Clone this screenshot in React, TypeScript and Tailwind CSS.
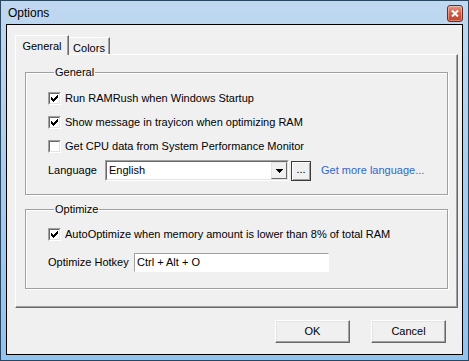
const font = { fontFamily: '"Liberation Sans", Arial, sans-serif' };

function CheckBox({ checked }: { checked: boolean }) {
  return (
    <div className="h-[13px] w-[13px] shrink-0 border border-t-[#a0a0a0] border-l-[#a0a0a0] border-r-white border-b-white">
      <div className="flex h-full w-full items-center justify-center border border-t-[#696969] border-l-[#696969] border-r-[#e3e3e3] border-b-[#e3e3e3] bg-white">
        {checked && (
          <svg width="7" height="7" viewBox="0 0 7 7" shapeRendering="crispEdges">
            <path
              d="M0 2h1v1H0zM0 3h2v1H0zM0 4h3v1H0zM1 5h2v1H1zM2 6h1v1H2zM3 3h1v3H3zM4 2h1v3H4zM5 1h1v3H5zM6 0h1v3H6z"
              fill="#000"
            />
          </svg>
        )}
      </div>
    </div>
  );
}

function CheckRow({ checked, label }: { checked: boolean; label: string }) {
  return (
    <div className="flex h-[24px] items-center gap-[4px]">
      <CheckBox checked={checked} />
      <span>{label}</span>
    </div>
  );
}

function RaisedButton({ label, className }: { label: string; className: string }) {
  return (
    <div
      className={`flex items-center justify-center border border-t-white border-l-white border-r-[#696969] border-b-[#696969] bg-[#f0f0f0] shadow-[inset_-1px_-1px_0_#a0a0a0,inset_1px_1px_0_#e3e3e3] ${className}`}
    >
      {label}
    </div>
  );
}

export default function App() {
  return (
    <div
      className="flex h-[361px] w-[469px] flex-col border border-[#2b4660] bg-gradient-to-b from-[#c0d8f0] via-[#a9cdee] to-[#92c3ee] text-[11px] text-black"
      style={font}
    >
      {/* Title bar */}
      <div className="flex h-[23px] shrink-0 items-start justify-between">
        <span className="pl-[7px] pt-[4px] text-[12px] leading-[16px] text-black">Options</span>
        <div className="mr-[5px] mt-[4px] flex h-[17px] w-[16px] items-center justify-center rounded-[3px] border border-[#6d2c22] bg-gradient-to-b from-[#e59a88] via-[#d35b43] to-[#c2432c] shadow-[inset_0_0_0_1px_rgba(255,255,255,0.35)]">
          <svg width="8" height="7" viewBox="0 0 8 7">
            <path d="M1 0.5L7 6.5M7 0.5L1 6.5" stroke="#fff" strokeWidth="2" />
          </svg>
        </div>
      </div>

      {/* Client area */}
      <div className="mx-[5px] mb-[5px] flex flex-1 flex-col border border-black bg-[#f0f0f0]">
        {/* Tabs */}
        <div className="flex items-end pl-[8px] pt-[10px]">
          <div className="relative z-10 mb-[-1px] flex h-[20px] w-[54px] items-start justify-center border-l border-t border-r border-l-white border-t-white border-r-[#696969] bg-[#f0f0f0] pt-[2px] shadow-[inset_-1px_0_0_#a0a0a0]">
            General
          </div>
          <div className="flex h-[17px] w-[41px] items-start justify-center border-t border-r border-t-white border-r-[#696969] bg-[#f0f0f0] pt-[2px] shadow-[inset_-1px_0_0_#a0a0a0]">
            Colors
          </div>
        </div>

        {/* Tab panel */}
        <div className="ml-[8px] mr-[4px] flex h-[254px] flex-col border border-t-white border-l-white border-r-[#696969] border-b-[#696969] px-[9px] pt-[11px] shadow-[inset_-1px_-1px_0_#a0a0a0]">
          <fieldset className="border border-[#a0a0a0] pb-[13px] pl-[22px] pr-[10px] pt-[7px] shadow-[1px_1px_0_#fff,inset_1px_1px_0_#fff]">
            <legend className="ml-[6px] px-[1px] leading-[13px]">General</legend>
            <CheckRow checked label="Run RAMRush when Windows Startup" />
            <CheckRow checked label="Show message in trayicon when optimizing RAM" />
            <CheckRow checked={false} label="Get CPU data from System Performance Monitor" />
            <div className="mt-[2px] flex h-[21px] items-center">
              <span className="w-[57px] shrink-0 pl-[0px]">Language</span>
              <div className="flex h-[21px] w-[184px] items-stretch border border-t-[#a0a0a0] border-l-[#a0a0a0] border-r-white border-b-white">
                <div className="flex flex-1 items-center border border-t-[#696969] border-l-[#696969] border-r-[#e3e3e3] border-b-[#e3e3e3] bg-white pl-[2px]">
                  <span className="flex-1">English</span>
                  <div className="flex h-full w-[16px] items-center justify-center border border-t-[#e3e3e3] border-l-[#e3e3e3] border-r-[#696969] border-b-[#696969] bg-[#f0f0f0]">
                    <svg width="7" height="4" viewBox="0 0 7 4" shapeRendering="crispEdges">
                      <path d="M0 0h7v1H0zM1 1h5v1H1zM2 2h3v1H2zM3 3h1v1H3z" fill="#000" />
                    </svg>
                  </div>
                </div>
              </div>
              <div className="ml-[2px] flex h-[20px] w-[20px] items-center justify-center border border-[#3c3c3c] bg-[#f0f0f0] pb-[3px] shadow-[inset_1px_1px_0_#fff,inset_-1px_-1px_0_#a0a0a0]">
                ...
              </div>
              <span className="ml-[10px] text-[#3366cc]">Get more language...</span>
            </div>
          </fieldset>

          <fieldset className="mt-[8px] border border-[#a0a0a0] pb-[16px] pl-[22px] pr-[10px] pt-[6px] shadow-[1px_1px_0_#fff,inset_1px_1px_0_#fff]">
            <legend className="ml-[6px] px-[1px] leading-[13px]">Optimize</legend>
            <CheckRow checked label="AutoOptimize when memory amount is lower than 8% of total RAM" />
            <div className="mt-[7px] flex h-[19px] items-center">
              <span className="w-[86px] shrink-0">Optimize Hotkey</span>
              <div className="flex h-[19px] w-[195px] items-center border border-t-[#a0a0a0] border-l-[#a0a0a0] border-r-white border-b-white bg-white pl-[2px]">
                Ctrl + Alt + O
              </div>
            </div>
          </fieldset>
        </div>

        {/* Buttons */}
        <div className="mt-[12px] flex justify-end gap-[21px] pr-[16px]">
          <RaisedButton label="OK" className="h-[23px] w-[75px]" />
          <RaisedButton label="Cancel" className="h-[23px] w-[75px]" />
        </div>
      </div>
    </div>
  );
}
